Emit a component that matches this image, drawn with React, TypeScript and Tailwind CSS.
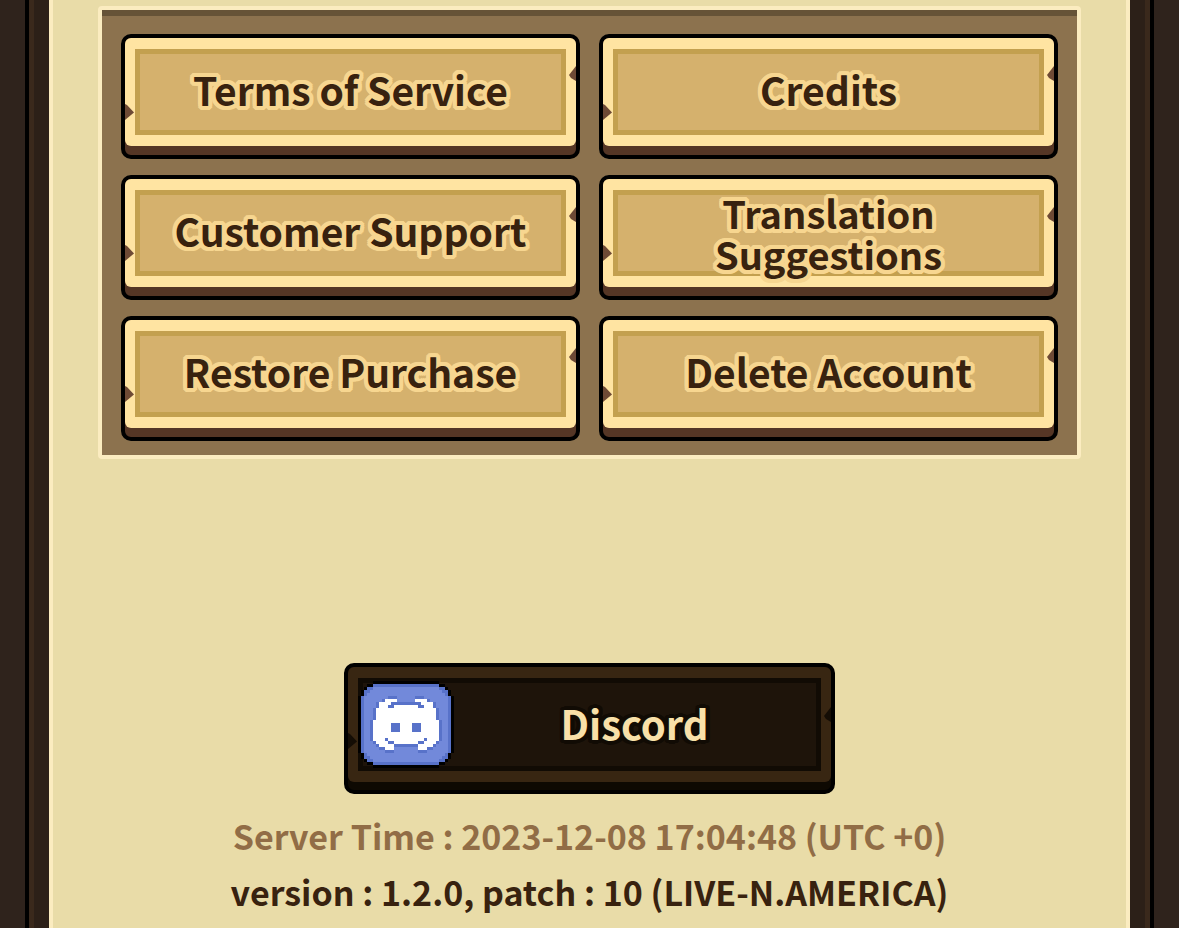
import { clsx } from 'clsx';

const links = [
    { name: 'Terms of Service' },
    { name: 'Credits' },
    { name: 'Customer Support' },
    { name: 'Translation Suggestions', wrap: true },
    { name: 'Restore Purchase' },
    { name: 'Delete Account' },
];

// Pixel art runs: [x, y, width, height] on a 32x29 grid
const OUTLINE = [[5, 0, 22, 29], [3, 1, 26, 27], [2, 2, 28, 25], [1, 3, 30, 23], [0, 5, 32, 19]];
const EDGE = [[5, 1, 22, 27], [3, 2, 26, 25], [2, 3, 28, 23], [1, 5, 30, 19]];
const FILL = [[5, 2, 22, 25], [4, 3, 24, 23], [3, 4, 26, 21], [2, 5, 28, 19]];
const SHADE = [
    [10, 5, 3, 1], [19, 5, 3, 1],
    [8, 6, 5, 1], [19, 6, 5, 1],
    [6, 7, 20, 2],
    [5, 9, 22, 4],
    [4, 13, 24, 7],
    [5, 20, 22, 1],
    [6, 21, 20, 1],
    [7, 22, 5, 1], [20, 22, 5, 1],
    [9, 23, 3, 1], [20, 23, 3, 1],
];
const FACE = [
    [9, 6, 4, 1], [19, 6, 4, 1],
    [7, 7, 4, 1], [21, 7, 4, 1],
    [7, 8, 3, 1], [12, 8, 8, 1], [22, 8, 3, 1],
    [6, 9, 20, 4],
    [5, 13, 22, 7],
    [6, 20, 20, 1],
    [7, 21, 5, 1], [20, 21, 5, 1],
    [9, 22, 3, 1], [20, 22, 3, 1],
];
const DETAIL = [
    [11, 14, 3, 3], [18, 14, 3, 3],
    [9, 19, 1, 1], [22, 19, 1, 1],
    [10, 20, 2, 1], [20, 20, 2, 1],
];

const Pixels = ({ runs, fill }: { runs: number[][]; fill: string }) => (
    <g fill={fill}>
        {runs.map(([x, y, w, h], i) => (
            <rect key={i} x={x} y={y} width={w} height={h} />
        ))}
    </g>
);

const DiscordIcon = () => (
    <svg viewBox="0 0 32 29" className="w-24 h-[87px] shrink-0" shapeRendering="crispEdges" aria-hidden="true">
        <Pixels runs={OUTLINE} fill="#000000" />
        <Pixels runs={EDGE} fill="#5872c9" />
        <Pixels runs={FILL} fill="#7289da" />
        <Pixels runs={SHADE} fill="#5872c9" />
        <Pixels runs={FACE} fill="#ffffff" />
        <Pixels runs={DETAIL} fill="#5872c9" />
    </svg>
);

// Chips cut into the left and right edges of a plank
const Notches = ({ left, right, color }: { left: string; right: string; color: string }) => (
    <>
        <svg viewBox="0 0 9 16" className={clsx('absolute left-0 w-[9px] h-4', left, color)} aria-hidden="true">
            <path d="M0 0 L2 1 L9 8.500 L6 11 L0 16 Z" fill="currentColor" />
        </svg>
        <svg viewBox="0 0 7 16" className={clsx('absolute right-0 w-[7px] h-4', right, color)} aria-hidden="true">
            <path d="M7 0 L0 9 L2 12 L7 15 Z" fill="currentColor" />
        </svg>
    </>
);

const MenuButton = ({ name, wrap }: { name: string; wrap?: boolean }) => (
    <button type="button" className="flex flex-col rounded-[10px] border-4 border-black bg-[#553625] pb-[9px] cursor-pointer">
        <span className="relative flex w-full h-[108px] rounded-md bg-[#ffe4a2] px-2.5 py-[11px]">
            <Notches left="bottom-[26px]" right="top-7" color="text-[#6e4a35]" />
            <span className="flex flex-1 items-center justify-center border-[5px] border-[#c3a04f] bg-[#d5b16d] px-4">
                <span
                    className={clsx(
                        'leading-[41px] font-bold text-[#38220f] [text-shadow:4px_0_#f7d690,-4px_0_#f7d690,0_4px_#f7d690,0_-4px_#f7d690,3px_3px_#f7d690,-3px_3px_#f7d690,3px_-3px_#f7d690,-3px_-3px_#f7d690,4px_2px_#f7d690,-4px_2px_#f7d690,4px_-2px_#f7d690,-4px_-2px_#f7d690,2px_4px_#f7d690,-2px_4px_#f7d690,2px_-4px_#f7d690,-2px_-4px_#f7d690]',
                        wrap ? 'text-[38px]' : 'text-[39px] pb-1.5',
                    )}
                >
                    {name}
                </span>
            </span>
        </span>
    </button>
);

const DiscordButton = () => (
    <button type="button" className="flex flex-col w-[491px] rounded-[10px] border-4 border-black bg-[#0e0902] pb-2 cursor-pointer">
        <span className="relative flex w-full h-[115px] rounded-md bg-[#382612] px-2.5 py-[11px]">
            <Notches left="bottom-[33px]" right="top-10" color="text-[#140d05]" />
            <span className="flex flex-1 items-center bg-[#1e140a] pr-1.5 shadow-[inset_0_0_0_5px_#110b04]">
                <DiscordIcon />
                <span className="flex-1 pb-0.5 text-center text-[40px] leading-[41px] font-bold text-[#f8e0a8] [text-shadow:4px_0_#110b04,-4px_0_#110b04,0_4px_#110b04,0_-4px_#110b04,3px_3px_#110b04,-3px_3px_#110b04,3px_-3px_#110b04,-3px_-3px_#110b04,4px_2px_#110b04,-4px_2px_#110b04,4px_-2px_#110b04,-4px_-2px_#110b04]">
                    Discord
                </span>
            </span>
        </span>
    </button>
);

export default function App() {
    return (
        <div className="min-h-screen flex bg-[#2f231c] px-[25px] font-['Noto_Sans_CJK_KR','Noto_Sans',sans-serif]">
            <div className="flex flex-1 border-x-4 border-black bg-[#2c2018]">
                <div className="flex flex-1 border-x-[5px] border-[#3a291c] px-[15px]">
                    <main className="flex flex-1 flex-col items-center border-x-4 border-[#fbecc0] bg-[#e9dca8] px-[45px] pt-1.5">
                        <nav className="grid w-full grid-cols-2 gap-x-[19px] gap-y-4 rounded-sm border-4 border-[#fbecc0] bg-[#8c724e] px-[19px] pt-6 pb-3.5 shadow-[inset_0_6px_0_#665337]">
                            {links.map((link) => (
                                <MenuButton key={link.name} name={link.name} wrap={link.wrap} />
                            ))}
                        </nav>

                        <div className="mt-[204px]">
                            <DiscordButton />
                        </div>

                        <div className="mt-3.5 text-center text-[34px] leading-[56px] font-bold">
                            <p className="text-[#916d46]">Server Time : 2023-12-08 17:04:48 (UTC +0)</p>
                            <p className="text-[#38220f]">version : 1.2.0, patch : 10 (LIVE-N.AMERICA)</p>
                        </div>
                    </main>
                </div>
            </div>
        </div>
    );
}
